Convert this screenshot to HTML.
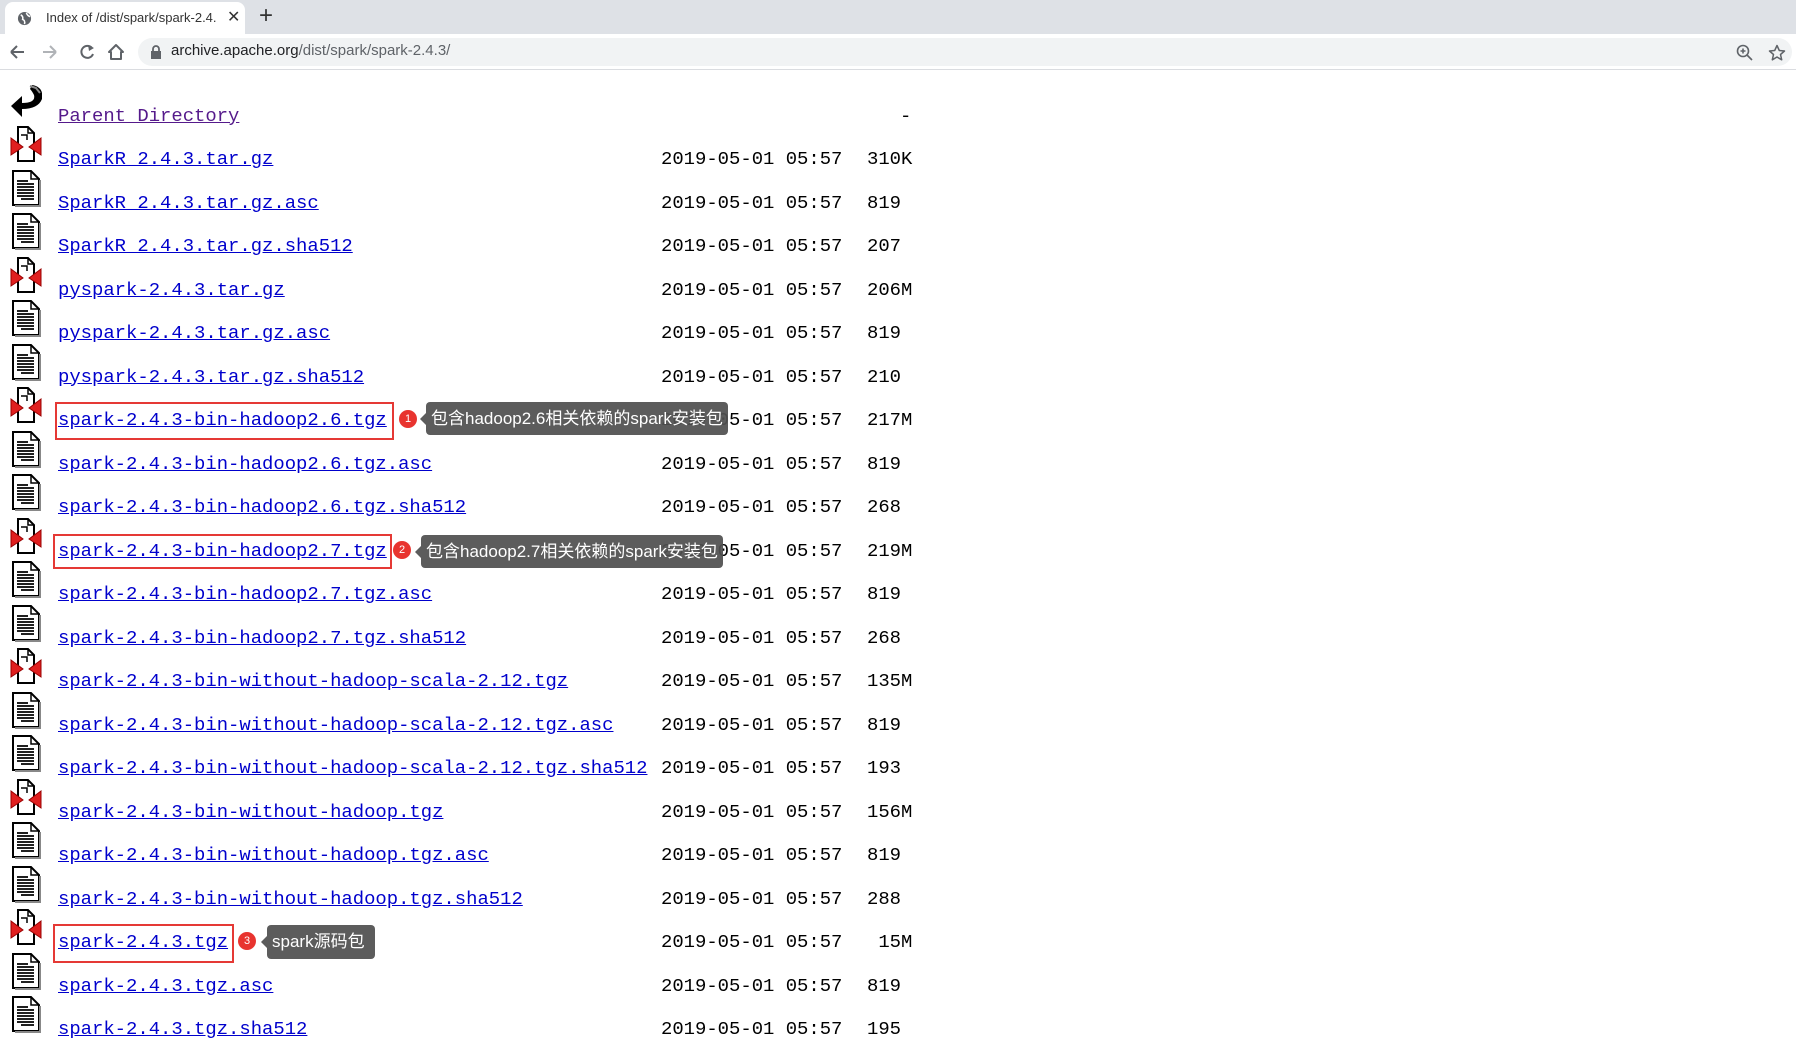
<!DOCTYPE html>
<html><head><meta charset="utf-8"><style>
*{margin:0;padding:0;box-sizing:border-box}
body{width:1796px;height:1052px;overflow:hidden;background:#fff;position:relative;font-family:"Liberation Mono",monospace}
.tabbar{position:absolute;left:0;top:0;width:1796px;height:34px;background:#dee1e6}
.tab{position:absolute;left:5px;top:2px;width:240px;height:32px;background:#fff;border-radius:8px 8px 0 0}
.tabt{position:absolute;left:41px;top:8px;font:13px "Liberation Sans",sans-serif;color:#333;white-space:nowrap}
.toolbar{position:absolute;left:0;top:34px;width:1796px;height:36px;background:#fff;border-bottom:1px solid #dadce0}
.pill{position:absolute;left:138px;top:38px;width:1654px;height:28px;background:#f1f3f4;border-radius:14px}
.url{position:absolute;left:171px;top:42px;font:15px "Liberation Sans",sans-serif;color:#202124}
.url span{color:#5f6368}
.r{position:absolute;height:22px;line-height:22px;font-size:18.9px;white-space:pre;color:#000}
a{color:#0000cc;text-decoration:underline}
.pd{color:#551a8b}
.ic{position:absolute;left:10px;width:32px;height:37px}
.box{position:absolute;border:2px solid #e53935}
.dot{position:absolute;width:18px;height:18px;border-radius:50%;background:#e8342f;color:#fff;font:11px "Liberation Sans",sans-serif;text-align:center;line-height:18px}
.tip{position:absolute;background:rgba(80,80,80,.93);color:#fff;border-radius:4px;font:17px "Liberation Sans","Noto Sans CJK SC",sans-serif;line-height:33px;padding-left:5px;white-space:nowrap}
.tip:before{content:"";position:absolute;left:-6px;top:11px;border:6px solid transparent;border-left:0;border-right-color:rgba(80,80,80,.93)}
</style></head><body>
<div class="tabbar"></div>
<div class="tab">
<svg style="position:absolute;left:12px;top:9px" width="15" height="15" viewBox="0 0 16 16"><circle cx="8" cy="8" r="7" fill="#5f6368"/><path d="M4 4 Q7 6 6 9 Q9 10 8 14 M10 2 Q11 5 14 6" stroke="#fff" stroke-width="1.6" fill="none"/></svg>
<div class="tabt">Index of /dist/spark/spark-2.4.</div>
<div style="position:absolute;left:222px;top:5px;font:16px 'Liberation Sans';color:#333">✕</div>
</div>
<div style="position:absolute;left:259px;top:2px;font:24px 'Liberation Sans';color:#333">+</div>
<div class="toolbar"></div>
<svg style="position:absolute;left:8px;top:42px" width="120" height="20" viewBox="0 0 120 20">
<path d="M3 10 H16 M3 10 L9 4 M3 10 L9 16" stroke="#5f6368" stroke-width="2" fill="none"/>
<path d="M35 10 H48 M48 10 L42 4 M48 10 L42 16" stroke="#b0b3b7" stroke-width="2" fill="none"/>
<path d="M84 6 A6 6 0 1 0 85 12" stroke="#5f6368" stroke-width="2" fill="none"/><path d="M80 3 L86 6 L81 9Z" fill="#5f6368"/>
<path d="M108 3 L101 10 H103 V17 H113 V10 H115 Z" stroke="#5f6368" stroke-width="2" fill="none" stroke-linejoin="round"/>
</svg>
<div class="pill"></div>
<svg style="position:absolute;left:150px;top:45px" width="12" height="14" viewBox="0 0 12 14"><rect x="1" y="6" width="10" height="8" fill="#5f6368"/><path d="M3 6 V4 A3 3 0 0 1 9 4 V6" stroke="#5f6368" stroke-width="1.8" fill="none"/></svg>
<div class="url">archive.apache.org<span>/dist/spark/spark-2.4.3/</span></div>
<svg style="position:absolute;left:1736px;top:44px" width="56" height="18" viewBox="0 0 56 18">
<circle cx="7" cy="7" r="5.5" stroke="#5f6368" stroke-width="1.6" fill="none"/><path d="M11 11 L16 16 M4.5 7 H9.5 M7 4.5 V9.5" stroke="#5f6368" stroke-width="1.6"/>
<path d="M41 1.5 L43.3 6.5 L48.5 7 L44.5 10.5 L45.7 15.8 L41 13 L36.3 15.8 L37.5 10.5 L33.5 7 L38.7 6.5 Z" stroke="#5f6368" stroke-width="1.5" fill="none" stroke-linejoin="round"/>
</svg>

<svg width="0" height="0" style="position:absolute"><defs>
<g id="tx"><path d="M3 1 H21 L29 9 V35 H3 Z" fill="#fff" stroke="#000" stroke-width="2"/><path d="M21 1 V9 H29" fill="none" stroke="#000" stroke-width="1.5"/><path d="M30 10 V36 H5" stroke="#888" stroke-width="2" fill="none"/>
<path d="M7 11 H18 M7 14 H24 M7 17 H24 M7 20 H24 M7 23 H24 M7 26 H24 M11 29 H24" stroke="#000" stroke-width="1.8"/></g>
<g id="cp"><path d="M8 1 H18 L24 7 V35 H8 Z" fill="#fff" stroke="#000" stroke-width="2"/><path d="M18 1 V7 H24" fill="none" stroke="#000" stroke-width="1.5"/><path d="M11 9 H17 V14" stroke="#000" stroke-width="1.5" fill="none"/>
<path d="M1 12 L13 21 L1 29Z M31 12 L19 21 L31 29Z" fill="#e02020" stroke="#900" stroke-width="1"/></g>
<g id="bk"><path d="M22 2 Q34 4 32 16 Q28 26 12 26 L12 34 L1 23 L12 13 L12 20 Q26 20 24 12 Q22 8 20 6Z" fill="#000"/><path d="M20 3 L26 5 L30 10" stroke="#888" stroke-width="2" fill="none"/></g>
</defs></svg>

<div id="rows"></div>
<script>
var R=[["Parent Directory","bk","","-"],
["SparkR 2.4.3.tar.gz","cp",1,"310K"],["SparkR 2.4.3.tar.gz.asc","tx",1,"819"],["SparkR 2.4.3.tar.gz.sha512","tx",1,"207"],
["pyspark-2.4.3.tar.gz","cp",1,"206M"],["pyspark-2.4.3.tar.gz.asc","tx",1,"819"],["pyspark-2.4.3.tar.gz.sha512","tx",1,"210"],
["spark-2.4.3-bin-hadoop2.6.tgz","cp",1,"217M"],["spark-2.4.3-bin-hadoop2.6.tgz.asc","tx",1,"819"],["spark-2.4.3-bin-hadoop2.6.tgz.sha512","tx",1,"268"],
["spark-2.4.3-bin-hadoop2.7.tgz","cp",1,"219M"],["spark-2.4.3-bin-hadoop2.7.tgz.asc","tx",1,"819"],["spark-2.4.3-bin-hadoop2.7.tgz.sha512","tx",1,"268"],
["spark-2.4.3-bin-without-hadoop-scala-2.12.tgz","cp",1,"135M"],["spark-2.4.3-bin-without-hadoop-scala-2.12.tgz.asc","tx",1,"819"],["spark-2.4.3-bin-without-hadoop-scala-2.12.tgz.sha512","tx",1,"193"],
["spark-2.4.3-bin-without-hadoop.tgz","cp",1,"156M"],["spark-2.4.3-bin-without-hadoop.tgz.asc","tx",1,"819"],["spark-2.4.3-bin-without-hadoop.tgz.sha512","tx",1,"288"],
["spark-2.4.3.tgz","cp",1," 15M"],["spark-2.4.3.tgz.asc","tx",1,"819"],["spark-2.4.3.tgz.sha512","tx",1,"195"]];
var h="";
R.forEach(function(r,i){var c=115.5+43.5*i;
h+='<svg class="ic" style="top:'+(c-33)+'px" viewBox="0 0 32 37"><use href="#'+r[1]+'"/></svg>';
h+='<div class="r" style="left:58px;top:'+(c-11)+'px"><a class="'+(i==0?'pd':'')+'">'+r[0]+'</a></div>';
if(r[2])h+='<div class="r" style="left:661px;top:'+(c-11)+'px">2019-05-01 05:57</div>';
h+='<div class="r" style="left:'+(i==0?900:867)+'px;top:'+(c-11)+'px">'+r[3]+'</div>';});
document.getElementById("rows").innerHTML=h;
</script>
<div class="box" style="left:55px;top:402px;width:339px;height:38px"></div>
<div class="dot" style="left:399px;top:410px">1</div>
<div class="tip" style="left:426px;top:402px;width:302px;height:33px">包含hadoop2.6相关依赖的spark安装包</div>
<div class="box" style="left:53px;top:534px;width:339px;height:35px"></div>
<div class="dot" style="left:393px;top:541px">2</div>
<div class="tip" style="left:421px;top:535px;width:302px;height:33px">包含hadoop2.7相关依赖的spark安装包</div>
<div class="box" style="left:53px;top:924px;width:181px;height:39px"></div>
<div class="dot" style="left:238px;top:932px">3</div>
<div class="tip" style="left:267px;top:925px;width:108px;height:34px">spark源码包</div>
</body></html>
